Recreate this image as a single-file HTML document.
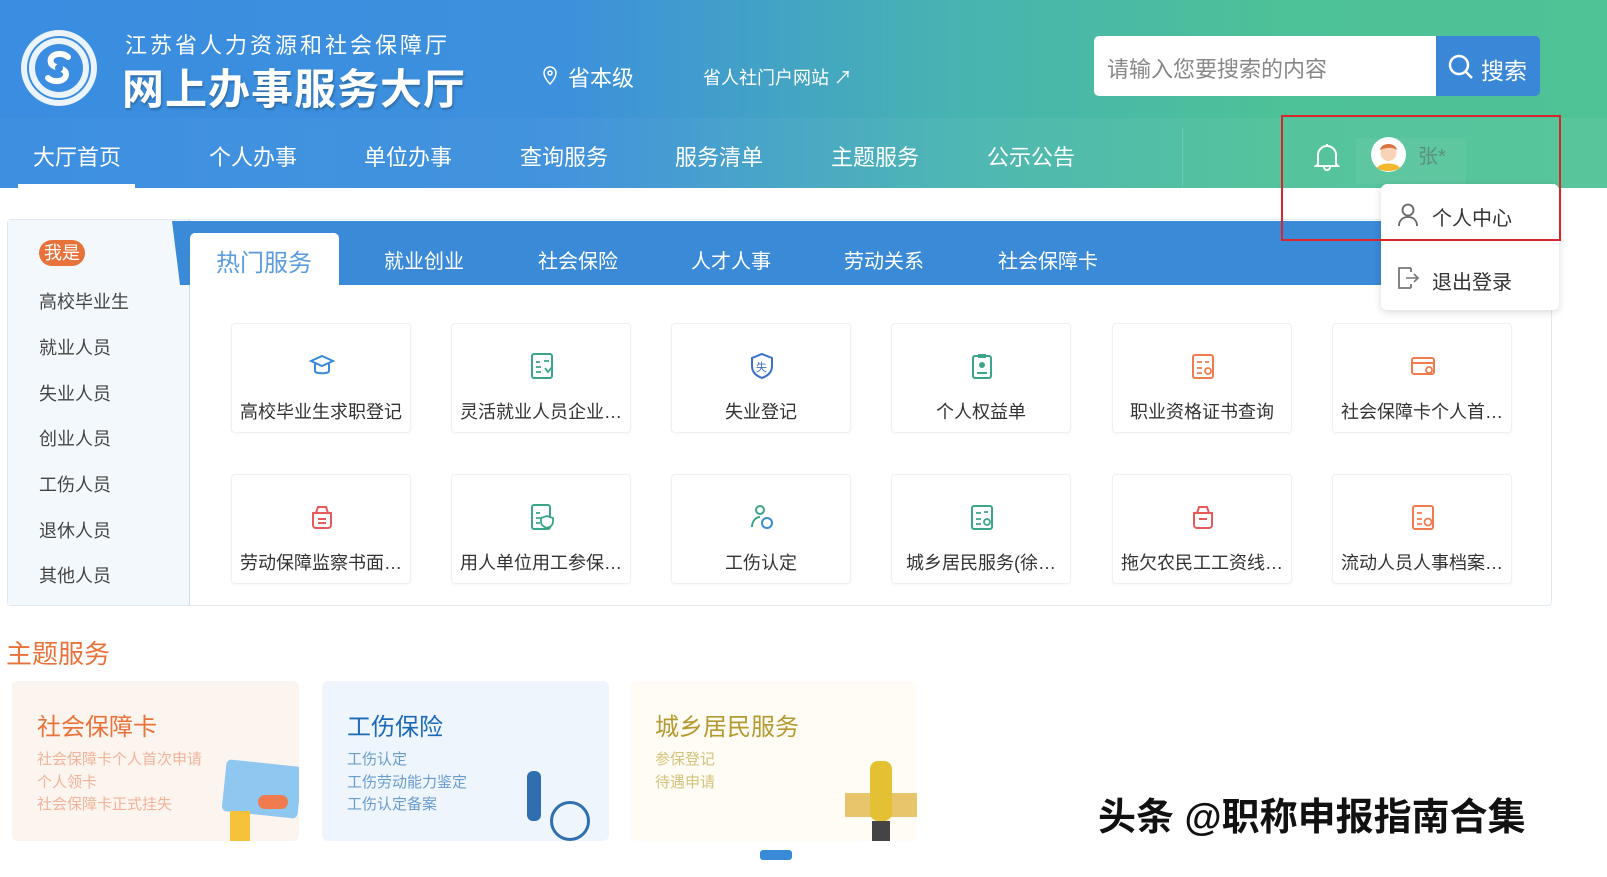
<!DOCTYPE html>
<html><head><meta charset="utf-8"><style>
*{margin:0;padding:0;box-sizing:border-box}
body{width:1607px;height:877px;overflow:hidden;background:#fff;font-family:"Liberation Sans","Noto Sans CJK SC",sans-serif;position:relative;color:#333}
.a{position:absolute;white-space:nowrap}
#hd{position:absolute;left:0;top:0;width:1607px;height:188px;background:linear-gradient(90deg,#3a8de0 0%,#3d90dc 35%,#48b4b0 60%,#4dc197 80%,#4fc296 100%)}
#nav{position:absolute;left:0;top:118px;width:1607px;height:70px;background:linear-gradient(90deg,rgba(255,255,255,0.02),rgba(255,255,255,0.05))}
.nv{position:absolute;top:140px;color:#fff;font-size:22px}
.card{position:absolute;width:180px;height:110px;border:1px solid #eef0f3;border-radius:4px;background:#fff;box-shadow:0 1px 3px rgba(0,0,0,0.04)}
.card span{position:absolute;left:0;right:0;top:74px;text-align:center;font-size:18px;color:#333;white-space:nowrap}
.card svg{position:absolute;left:76px;top:28px}
.sb{position:absolute;left:39px;font-size:18px;color:#444}
.tb{position:absolute;top:245px;color:#fff;font-size:20px}
.tc{position:absolute;width:287px;height:160px;top:681px;border-radius:6px;overflow:hidden}
.tc .t{position:absolute;left:25px;top:26px;font-size:24px}
.tc .s{position:absolute;left:25px;top:68px;font-size:15px;line-height:22.5px}
.top{z-index:5}
</style></head><body>
<div id="hd"><div id="nav"></div></div>
<svg class="a" style="left:18px;top:27px" width="82" height="82" viewBox="0 0 82 82"><circle cx="41" cy="41" r="38" fill="#fff" opacity="0.9"/><circle cx="41" cy="41" r="31" fill="none" stroke="#3a8de0" stroke-width="2"/><circle cx="41" cy="41" r="24" fill="#3a8de0"/><path d="M50 30c-6-6-20-3-17 6 2 6 16 4 15 12-1 7-13 8-18 3" stroke="#fff" stroke-width="6" fill="none" stroke-linecap="round"/><circle cx="41" cy="41" r="4" fill="#3a8de0"/></svg>
<div class="a" style="left:125px;top:28px;color:#fff;font-size:22px;letter-spacing:3px">江苏省人力资源和社会保障厅</div>
<div class="a" style="left:122px;top:56px;color:#fff;font-size:42px;font-weight:bold;letter-spacing:1px;text-shadow:1px 2px 2px rgba(0,0,0,0.25)">网上办事服务大厅</div>
<svg class="a" style="left:542px;top:66px" width="16" height="20" viewBox="0 0 16 20"><path d="M8 1a6 6 0 0 1 6 6c0 5-6 11-6 11S2 12 2 7a6 6 0 0 1 6-6z" fill="none" stroke="#fff" stroke-width="1.5"/><circle cx="8" cy="7" r="2" fill="none" stroke="#fff" stroke-width="1.5"/></svg>
<div class="a" style="left:568px;top:61px;color:#fff;font-size:22px">省本级</div>
<div class="a" style="left:703px;top:64px;color:#fff;font-size:18px">省人社门户网站 ↗</div>
<div class="a" style="left:1094px;top:36px;width:343px;height:60px;background:#fff;border-radius:5px 0 0 5px"></div>
<div class="a" style="left:1107px;top:52px;color:#888;font-size:22px">请输入您要搜索的内容</div>
<div class="a" style="left:1436px;top:36px;width:104px;height:60px;background:#3a87d8;border-radius:0 5px 5px 0"></div>
<svg class="a" style="left:1448px;top:54px" width="26" height="26" viewBox="0 0 26 26"><circle cx="11" cy="11" r="9" fill="none" stroke="#fff" stroke-width="2.5"/><path d="M18 18l6 6" stroke="#fff" stroke-width="2.5"/></svg>
<div class="a" style="left:1481px;top:52px;color:#fff;font-size:23px">搜索</div>
<div class="nv" style="left:33px">大厅首页</div>
<div class="a" style="left:18px;top:184px;width:117px;height:4px;background:#fff"></div>
<div class="nv" style="left:209px">个人办事</div>
<div class="nv" style="left:364px">单位办事</div>
<div class="nv" style="left:520px">查询服务</div>
<div class="nv" style="left:675px">服务清单</div>
<div class="nv" style="left:831px">主题服务</div>
<div class="nv" style="left:987px">公示公告</div>
<div class="a" style="left:1182px;top:128px;width:1px;height:60px;background:rgba(255,255,255,0.15)"></div>
<svg class="a" style="left:1314px;top:141px" width="26" height="30" viewBox="0 0 26 30"><path d="M4 23V14a9 9 0 0 1 18 0v9l2 2H2z" fill="none" stroke="#fff" stroke-width="2"/><path d="M10 26a3 3 0 0 0 6 0M13 3v2" stroke="#fff" stroke-width="2" fill="none"/></svg>
<div class="a" style="left:1356px;top:138px;width:110px;height:46px;background:rgba(255,255,255,0.05)"></div>
<svg class="a" style="left:1371px;top:137px" width="35" height="35" viewBox="0 0 35 35"><circle cx="17.5" cy="17.5" r="17.5" fill="#fff"/><circle cx="17.5" cy="16" r="8" fill="#f9d3b5"/><path d="M9 13c1-8 16-8 17 0-4-3-10-3-17 0z" fill="#d9743f"/><path d="M6 31c3-6 20-6 23 0-6 4-17 4-23 0z" fill="#f5b72f"/></svg>
<div class="a" style="left:1418px;top:140px;color:#5b8f7f;font-size:20px">张*</div>
<!-- main panel -->
<div class="a" style="left:7px;top:219px;width:1545px;height:387px;border:1px solid #e1e8f0;border-radius:4px"></div>
<div class="a" style="left:8px;top:220px;width:182px;height:385px;background:#f3f8fd;border-right:1px solid #cfe0f2"></div>
<div class="a" style="left:190px;top:221px;width:1361px;height:64px;background:#3a8ad8"></div>
<svg class="a" style="left:172px;top:221px" width="19" height="64"><polygon points="0,0 19,0 19,64 8,64" fill="#3a8ad8"/></svg>
<div class="a" style="left:190px;top:233px;width:149px;height:53px;background:#fff;border-radius:5px 5px 0 0"></div>
<div class="a" style="left:216px;top:243px;font-size:24px;color:#5a9be0">热门服务</div>
<div class="tb" style="left:384px">就业创业</div>
<div class="tb" style="left:538px">社会保险</div>
<div class="tb" style="left:691px">人才人事</div>
<div class="tb" style="left:844px">劳动关系</div>
<div class="tb" style="left:998px">社会保障卡</div>
<div class="a" style="left:39px;top:240px;width:46px;height:26px;border-radius:13px;background:#e8733a;color:#fff;font-size:18px;text-align:center;line-height:26px">我是</div>
<div class="sb" style="top:288px">高校毕业生</div>
<div class="sb" style="top:334px">就业人员</div>
<div class="sb" style="top:380px">失业人员</div>
<div class="sb" style="top:425px">创业人员</div>
<div class="sb" style="top:471px">工伤人员</div>
<div class="sb" style="top:517px">退休人员</div>
<div class="sb" style="top:562px">其他人员</div>
<div class="card" style="left:231px;top:323px"><svg width="28" height="28" viewBox="0 0 28 28"><path d="M3 9l11-5 11 5-11 5z M7 11v8c0 3 14 3 14 0v-8" fill="none" stroke="#3a8ad8" stroke-width="2"/></svg><span>高校毕业生求职登记</span></div>
<div class="card" style="left:451px;top:323px"><svg width="28" height="28" viewBox="0 0 28 28"><rect x="4" y="2" width="20" height="24" rx="2" fill="none" stroke="#3aa58a" stroke-width="2"/><path d="M8 10h4M8 15h5M8 20h5M16 9h5M17 16l3 4 4-5" stroke="#3aa58a" stroke-width="1.8" fill="none"/></svg><span>灵活就业人员企业…</span></div>
<div class="card" style="left:671px;top:323px"><svg width="28" height="28" viewBox="0 0 28 28"><path d="M14 2l10 4v8c0 7-5 10-10 12C9 24 4 21 4 14V6z" fill="none" stroke="#3a6fd0" stroke-width="2"/><text x="8" y="19" font-size="11" fill="#3a6fd0">失</text></svg><span>失业登记</span></div>
<div class="card" style="left:891px;top:323px"><svg width="28" height="28" viewBox="0 0 28 28"><rect x="5" y="4" width="18" height="22" rx="2" fill="none" stroke="#3aa58a" stroke-width="2"/><rect x="10" y="2" width="8" height="4" fill="#3aa58a"/><circle cx="14" cy="13" r="3" fill="#3aa58a"/><path d="M9 21h10" stroke="#3aa58a" stroke-width="2"/></svg><span>个人权益单</span></div>
<div class="card" style="left:1112px;top:323px"><svg width="28" height="28" viewBox="0 0 28 28"><rect x="4" y="3" width="20" height="23" rx="2" fill="none" stroke="#f07b4f" stroke-width="2"/><path d="M8 10h5M16 10h4M8 16h5M8 21h5" stroke="#f07b4f" stroke-width="1.8"/><circle cx="19" cy="19" r="3" fill="none" stroke="#f07b4f" stroke-width="1.8"/></svg><span>职业资格证书查询</span></div>
<div class="card" style="left:1332px;top:323px"><svg width="28" height="28" viewBox="0 0 28 28"><rect x="3" y="6" width="22" height="16" rx="2" fill="none" stroke="#f07b4f" stroke-width="2"/><path d="M3 11h22" stroke="#f07b4f" stroke-width="2"/><circle cx="20" cy="18" r="3" fill="none" stroke="#f07b4f" stroke-width="1.8"/></svg><span>社会保障卡个人首…</span></div>
<div class="card" style="left:231px;top:474px"><svg width="28" height="28" viewBox="0 0 28 28"><path d="M5 10h18v12a3 3 0 0 1-3 3H8a3 3 0 0 1-3-3z M8 10l2-6h8l2 6M10 16h8M10 20h8" fill="none" stroke="#e85a5a" stroke-width="2"/></svg><span>劳动保障监察书面…</span></div>
<div class="card" style="left:451px;top:474px"><svg width="28" height="28" viewBox="0 0 28 28"><rect x="4" y="2" width="18" height="24" rx="2" fill="none" stroke="#3aa58a" stroke-width="2"/><path d="M8 10h4M8 15h4M8 20h4" stroke="#3aa58a" stroke-width="1.8"/><path d="M19 13l6 2v4c0 3-3 5-6 6-3-1-6-3-6-6v-4z" fill="#fff" stroke="#3aa58a" stroke-width="1.8"/></svg><span>用人单位用工参保…</span></div>
<div class="card" style="left:671px;top:474px"><svg width="28" height="28" viewBox="0 0 28 28"><circle cx="12" cy="7" r="4" fill="none" stroke="#3aa58a" stroke-width="2"/><path d="M4 24c0-6 4-10 8-10" fill="none" stroke="#3aa58a" stroke-width="2"/><circle cx="19" cy="20" r="5" fill="none" stroke="#3a8ad8" stroke-width="2"/></svg><span>工伤认定</span></div>
<div class="card" style="left:891px;top:474px"><svg width="28" height="28" viewBox="0 0 28 28"><rect x="4" y="3" width="20" height="23" rx="2" fill="none" stroke="#3aa58a" stroke-width="2"/><path d="M8 10h5M8 16h5M8 21h5M16 9h4" stroke="#3aa58a" stroke-width="1.8"/><circle cx="19" cy="19" r="3" fill="none" stroke="#3aa58a" stroke-width="1.8"/></svg><span>城乡居民服务(徐…</span></div>
<div class="card" style="left:1112px;top:474px"><svg width="28" height="28" viewBox="0 0 28 28"><path d="M5 10h18v12a3 3 0 0 1-3 3H8a3 3 0 0 1-3-3z M8 10l2-6h8l2 6M10 16h8" fill="none" stroke="#e85a5a" stroke-width="2"/></svg><span>拖欠农民工工资线…</span></div>
<div class="card" style="left:1332px;top:474px"><svg width="28" height="28" viewBox="0 0 28 28"><rect x="4" y="3" width="20" height="23" rx="2" fill="none" stroke="#f07b4f" stroke-width="2"/><path d="M8 10h5M8 16h5M8 21h5" stroke="#f07b4f" stroke-width="1.8"/><circle cx="19" cy="19" r="3.5" fill="none" stroke="#f07b4f" stroke-width="1.8"/></svg><span>流动人员人事档案…</span></div>
<!-- dropdown (on top) -->
<div class="a top" style="left:1381px;top:184px;width:178px;height:126px;background:#fff;border-radius:6px;box-shadow:0 2px 8px rgba(0,0,0,0.15)"></div>
<svg class="a top" style="left:1397px;top:203px" width="22" height="24" viewBox="0 0 22 24"><circle cx="11" cy="7" r="5.5" fill="none" stroke="#666" stroke-width="1.8"/><path d="M2 23c0-6 4-9 9-9s9 3 9 9" fill="none" stroke="#666" stroke-width="1.8"/></svg>
<div class="a top" style="left:1432px;top:202px;font-size:20px;color:#333">个人中心</div>
<svg class="a top" style="left:1397px;top:266px" width="24" height="24" viewBox="0 0 24 24"><path d="M14 2H2v20h12M14 22V18M14 2v4" fill="none" stroke="#777" stroke-width="1.8"/><path d="M9 12h12M17 8l4 4-4 4" fill="none" stroke="#777" stroke-width="1.6"/></svg>
<div class="a top" style="left:1432px;top:266px;font-size:20px;color:#333">退出登录</div>
<div class="a top" style="left:1281px;top:115px;width:280px;height:126px;border:2px solid #d9262c"></div>
<!-- theme -->
<div class="a" style="left:6px;top:634px;font-size:26px;color:#e8733a">主题服务</div>
<div class="tc" style="left:12px;background:#fcf4ef"><div class="t" style="color:#e8733a">社会保障卡</div><div class="s" style="color:#f0b49a">社会保障卡个人首次申请<br>个人领卡<br>社会保障卡正式挂失</div>
<div class="a" style="left:212px;top:82px;width:76px;height:52px;background:#8ec7ef;border-radius:5px;transform:rotate(6deg)"></div><div class="a" style="left:246px;top:114px;width:30px;height:14px;background:#f07b4f;border-radius:7px"></div><div class="a" style="left:218px;top:130px;width:20px;height:30px;background:#f5c23a"></div></div>
<div class="tc" style="left:322px;background:#eef5fc"><div class="t" style="color:#1a6ab8">工伤保险</div><div class="s" style="color:#6a9ccc">工伤认定<br>工伤劳动能力鉴定<br>工伤认定备案</div>
<div class="a" style="left:205px;top:90px;width:14px;height:50px;background:#2f6fb0;border-radius:6px"></div><div class="a" style="left:228px;top:120px;width:40px;height:40px;border:3px solid #2f6fb0;border-radius:50%"></div></div>
<div class="tc" style="left:630px;background:#fefcf5"><div class="t" style="color:#b59a30">城乡居民服务</div><div class="s" style="color:#d4c27a">参保登记<br>待遇申请</div>
<div class="a" style="left:215px;top:112px;width:72px;height:24px;background:#e8c46a"></div><div class="a" style="left:240px;top:80px;width:22px;height:60px;background:#e4c034;border-radius:8px"></div><div class="a" style="left:242px;top:140px;width:18px;height:20px;background:#444"></div></div>
<div class="a" style="left:760px;top:850px;width:32px;height:10px;background:#3a8ad8;border-radius:3px"></div>
<div class="a" style="left:1098px;top:786px;font-size:38px;color:#111;font-weight:bold;text-shadow:0 0 3px #fff">头条 @职称申报指南合集</div>
</body></html>
